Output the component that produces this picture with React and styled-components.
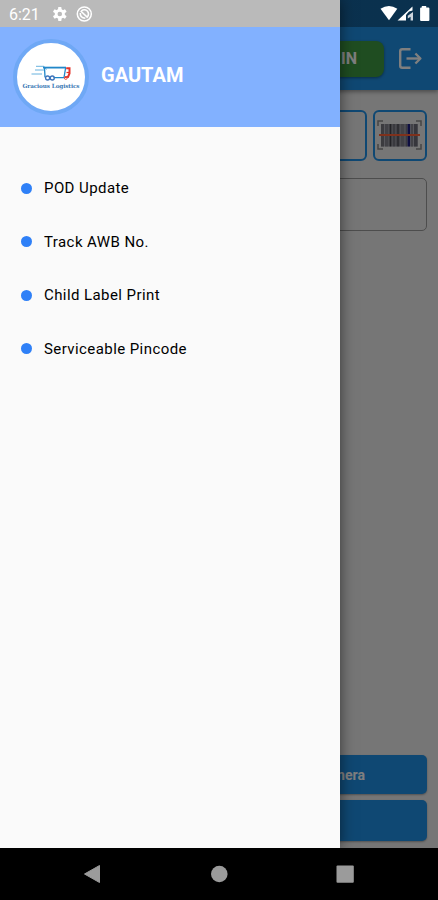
import React from 'react';
import styled, { createGlobalStyle } from 'styled-components';

const menuItems = ['POD Update', 'Track AWB No.', 'Child Label Print', 'Serviceable Pincode'];

// [x, width, color]
const bars = [
    [6, 3, '#77777f'], [10, 3.5, '#82828c'], [14.5, 2, '#45454d'], [17.5, 3, '#74747f'],
    [21.5, 3, '#5c5c66'], [25.5, 4, '#85858f'], [30.5, 1.5, '#74747e'], [32.5, 2.6, '#1c1c80'],
    [36, 2, '#85858f'], [39, 3.5, '#6d6d78'],
];

const App = () => {
    return (
        <Phone>
            <GlobalStyle />
            <Screen>
                <AppBar>
                    <CheckInButton>CHECK IN</CheckInButton>
                    <LogoutIcon />
                </AppBar>
                <Body>
                    <SearchRow>
                        <SearchInput />
                        <ScanButton>
                            <BarcodeIcon />
                        </ScanButton>
                    </SearchRow>
                    <DetailBox />
                    <Spacer />
                    <ButtonRow>
                        <ActionButton>Gallery</ActionButton>
                        <ActionButton>Open Camera</ActionButton>
                    </ButtonRow>
                    <SubmitButton />
                </Body>
            </Screen>
            <Scrim />
            <Drawer>
                <DrawerHeader>
                    <Avatar>
                        <TruckLogo />
                    </Avatar>
                    <UserName>GAUTAM</UserName>
                </DrawerHeader>
                <Menu>
                    {menuItems.map(item => (
                        <MenuItem key={item}>
                            <Dot />
                            {item}
                        </MenuItem>
                    ))}
                </Menu>
            </Drawer>
            <StatusBar>
                <Clock>6:21</Clock>
                <StatusLeft />
                <StatusRight />
            </StatusBar>
            <NavBar>
                <svg width="438" height="52" viewBox="0 0 438 52">
                    <path d="M84.5 26 L99.5 17.5 V34.5 Z" fill="#9b9b9b" stroke="#9b9b9b" strokeLinejoin="round" />
                    <circle cx="219.3" cy="26" r="8.3" fill="#9b9b9b" />
                    <rect x="336.5" y="17.5" width="17.3" height="17.3" rx="1" fill="#9b9b9b" />
                </svg>
            </NavBar>
        </Phone>
    );
};

const LogoutIcon = () => (
    <svg width="24" height="24" viewBox="0 0 24 24" fill="none" stroke="#fff" strokeWidth="2.4" strokeLinejoin="round">
        <path d="M11.5 2.2 H3.2 Q1.2 2.2 1.2 4.2 V18.8 Q1.2 20.8 3.2 20.8 H11.5" />
        <path d="M7.5 11.5 H21" />
        <path d="M16.4 6.5 L21.4 11.5 L16.4 16.5" />
    </svg>
);

const BarcodeIcon = () => (
    <svg width="50" height="36" viewBox="0 0 50 36">
        <g fill="none" stroke="#8b8b8b" strokeWidth="1.5">
            <path d="M3 9 V4 H8" />
            <path d="M41 4 H46 V9" />
            <path d="M3 27 V32 H8" />
            <path d="M41 32 H46 V27" />
        </g>
        <rect x="6" y="7" width="37" height="22.5" fill="#b0b0ba" />
        {bars.map(([x, width, color]) => (
            <rect key={x} x={x} y="7" width={width} height="22.5" fill={color} />
        ))}
        <path d="M4 18 H45" stroke="#ff6238" strokeWidth="2" />
    </svg>
);

const TruckLogo = () => (
    <svg width="66" height="66" viewBox="0 0 66 66">
        <g fill="none" stroke="#2187c9" strokeWidth="1.3">
            <path d="M18 22.3 H26 L28.5 25.5 M17 26 H27 M13.5 30 H24" strokeWidth="1" stroke="#68b2de" />
            <path d="M25 23.6 H48" strokeWidth="1.8" />
            <path d="M47.6 24 L46 33.6 H35.5" />
            <path d="M26.5 23.5 L27 33.4" />
            <circle cx="29.6" cy="34" r="2" stroke="#3d73ba" />
            <circle cx="34.3" cy="34" r="2" stroke="#3d73ba" />
        </g>
        <path d="M48.2 24.2 H51.5 V29.5 L50 33 H47" fill="none" stroke="#e3342b" strokeWidth="2" />
        <path d="M48.5 28.5 H51" stroke="#e3342b" strokeWidth="1.2" />
        <circle cx="47.8" cy="34" r="1.4" fill="none" stroke="#e3564f" />
        <text x="33" y="43.5" textAnchor="middle" textLength="57" fontFamily="'DejaVu Serif', serif" fontWeight="700" fontSize="5.7" fill="#3c7ab5">
            Gracious Logistics
        </text>
    </svg>
);

const StatusLeft = () => (
    <svg width="44" height="27" viewBox="0 0 44 27">
        <g transform="translate(10.8 14)">
            {[0, 60, 120].map(angle => (
                <rect key={angle} x="-1.7" y="-7" width="3.4" height="14" rx="0.7" fill="#fff" transform={`rotate(${angle})`} />
            ))}
            <circle r="3.6" fill="none" stroke="#fff" strokeWidth="3" />
            <circle r="2.3" fill="#bbb" />
        </g>
        <g transform="translate(35.3 14)" fill="none" stroke="#fff">
            <circle r="7" strokeWidth="1.5" />
            <path d="M-3 -3 Q0 -5.4 3 -3 Q5.4 0 3 3" strokeWidth="1.6" />
            <path d="M-3.6 -3 L3.4 3.6" strokeWidth="1.6" />
            <path d="M-4 -1 Q-4.2 4 1 4.2" strokeWidth="1.6" />
        </g>
    </svg>
);

const StatusRight = () => (
    <StatusIcons width="56" height="27" viewBox="0 0 56 27">
        <path d="M0.5 8.8 Q9 3.2 17.3 8.8 L9 20.2 Z" fill="#fff" />
        <path d="M17.5 20.5 L32.5 6.4 V10.4 L29 11.6 L26 15 V20.5 Z" fill="#fff" />
        <path d="M27.8 15.8 L33 12 V20.5 H30.6 V16.8 L27.8 18.5 Z" fill="#cdd5dd" />
        <path d="M41.8 6 H46.2 V7.6 H48.4 Q49.4 7.6 49.4 8.6 V20 Q49.4 21 48.4 21 H41.1 Q40.1 21 40.1 20 V8.6 Q40.1 7.6 41.1 7.6 H41.8 Z" fill="#fff" />
    </StatusIcons>
);

const GlobalStyle = createGlobalStyle`
    * {
        box-sizing: border-box;
    }

    body {
        margin: 0;
        font-family: Roboto, sans-serif;
        background: #000;
    }
`

const Phone = styled.div`
    position: relative;
    width: 438px;
    height: 900px;
    overflow: hidden;
    display: flex;
    flex-direction: column;
`

const Screen = styled.div`
    flex: 1;
    display: flex;
    flex-direction: column;
    background: #ececec;
`

const AppBar = styled.header`
    height: 90px;
    padding: 27px 15px 0 0;
    display: flex;
    align-items: center;
    justify-content: flex-end;
    gap: 15px;
    background: #1f90e6;
    box-shadow: 0 2px 4px rgba(0, 0, 0, 0.35);
`

const CheckInButton = styled.button`
    width: 120px;
    height: 36px;
    padding: 0 27px 0 0;
    border: none;
    border-radius: 8px;
    background: #3f9a43;
    box-shadow: 0 1px 3px rgba(0, 0, 0, 0.4);
    color: #fff;
    font: 700 16px Roboto, sans-serif;
    text-align: right;
`

const Body = styled.main`
    flex: 1;
    display: flex;
    flex-direction: column;
    padding: 19.5px 11px 7.5px 10.5px;
`

const SearchRow = styled.div`
    display: flex;
    gap: 6px;
    height: 51px;
`

const SearchInput = styled.div`
    flex: 1;
    border: 2px solid #1f90e6;
    border-radius: 6px;
`

const ScanButton = styled.div`
    width: 54.5px;
    display: flex;
    align-items: center;
    justify-content: center;
    border: 2px solid #1f90e6;
    border-radius: 6px;
`

const DetailBox = styled.div`
    height: 53px;
    margin-top: 17.5px;
    border: 1.5px solid #9a9a9a;
    border-radius: 5px;
`

const Spacer = styled.div`
    flex: 1;
`

const ButtonRow = styled.div`
    display: flex;
    gap: 8px;
    margin-bottom: 6px;
`

const ActionButton = styled.button`
    flex: 1;
    height: 39px;
    padding: 0 5px 0 0;
    border: none;
    border-radius: 5px;
    background: #1f90e6;
    box-shadow: 0 1px 2px rgba(0, 0, 0, 0.3);
    color: #fff;
    font: 700 14px Roboto, sans-serif;
`

const SubmitButton = styled(ActionButton)`
    flex: none;
    height: 40.5px;
`

const Scrim = styled.div`
    position: absolute;
    inset: 0 0 52px;
    background: rgba(0, 0, 0, 0.5);
`

const Drawer = styled.aside`
    position: absolute;
    top: 0;
    left: 0;
    bottom: 52px;
    width: 339.5px;
    background: #fafafa;
    box-shadow: 0 0 14px rgba(0, 0, 0, 0.55);
`

const DrawerHeader = styled.div`
    height: 127px;
    padding: 27px 0 0 13px;
    display: flex;
    align-items: center;
    gap: 12px;
    background: #82b1ff;
`

const Avatar = styled.div`
    width: 76px;
    height: 76px;
    display: flex;
    align-items: center;
    justify-content: center;
    border: 4.5px solid #6fa8f5;
    border-radius: 50%;
    background: #fff;
`

const UserName = styled.h1`
    margin: 0 0 4px;
    color: #fff;
    font-size: 20px;
    font-weight: 700;
`

const Menu = styled.ul`
    list-style: none;
    margin: 0;
    padding: 34.5px 0 0 21px;
`

const MenuItem = styled.li`
    height: 53.5px;
    display: flex;
    align-items: center;
    gap: 12px;
    color: #000;
    font-size: 15px;
    font-weight: 400;
    letter-spacing: 0.42px;
`

const Dot = styled.span`
    width: 11px;
    height: 11px;
    border-radius: 50%;
    background: #2f80f7;
`

const StatusBar = styled.div`
    position: absolute;
    top: 0;
    left: 0;
    right: 0;
    height: 27px;
    display: flex;
    align-items: center;
    padding-left: 9px;
    background: linear-gradient(90deg, #bababa 339.5px, rgba(0, 0, 0, 0.32) 339.5px);
`

const Clock = styled.span`
    width: 40px;
    margin-top: 2px;
    color: #fff;
    font-size: 16px;
`

const StatusIcons = styled.svg`
    margin-left: auto;
    margin-right: 2px;
`

const NavBar = styled.nav`
    height: 52px;
    background: #000;
`

export default App;
